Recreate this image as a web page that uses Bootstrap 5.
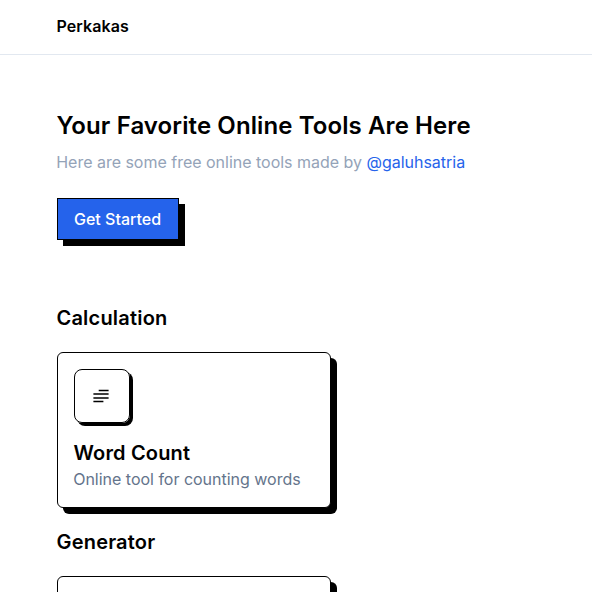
<!DOCTYPE html>
<html lang="en">
<head>
<meta charset="utf-8">
<meta name="viewport" content="width=device-width, initial-scale=1">
<title>Perkakas</title>
<link href="https://cdn.jsdelivr.net/npm/bootstrap@5.3.0/dist/css/bootstrap.min.css" rel="stylesheet">
<style>
body{font-family:Inter,sans-serif;color:#000;background:#fff;height:592px;overflow:hidden}
.page-wrap{padding:0 57px}
.site-bar{height:55px;padding-bottom:2px;border-bottom:1px solid #e2e8f0}
.brand-name{font-size:16px;line-height:24px;font-weight:600;color:#000;letter-spacing:.1px;margin-left:-.5px}
.hero{padding-top:55px}
.hero h1{font-size:24px;line-height:32px;font-weight:600;letter-spacing:.1px;margin-left:-.5px}
.hero p{color:#94a3b8;line-height:24px;letter-spacing:-.015px;margin-left:-.8px}
.hero p a{color:#2563eb}
.hero .start-btn{width:122px;height:42px;padding:8px 1px 8px 0;background:#2563eb;border:1px solid #000;border-radius:0;color:#fff;font-weight:500;line-height:24px;box-shadow:6px 6px 0 #000}
.tools{margin-top:64px}
.tools h2{font-size:20px;line-height:28px;font-weight:600;letter-spacing:.2px;margin:0 0 20px -.5px}
.tool-card{width:274px;height:156px;padding:16px;border:1px solid #000;border-radius:6px;box-shadow:6px 6px 0 #000;margin-bottom:20px}
.tool-icon{width:56px;height:54px;border:1px solid #000;border-radius:8px;box-shadow:3px 3px 0 #000}
.tool-card h3{font-size:20px;line-height:28px;font-weight:600;letter-spacing:.17px;margin:16px 0 0 -.5px}
.tool-card p{color:#64748b;line-height:24px;letter-spacing:-.015px;margin-left:-.8px}
</style>
</head>
<body>
<header class="site-bar page-wrap d-flex align-items-center"><a class="brand-name text-decoration-none" href="#">Perkakas</a></header>
<main class="page-wrap">
<section class="hero">
<h1 class="mb-2">Your Favorite Online Tools Are Here</h1>
<p class="mb-4">Here are some free online tools made by <a class="text-decoration-none" href="#">@galuhsatria</a></p>
<a class="btn start-btn" href="#">Get Started</a>
</section>
<section class="tools">
<h2>Calculation</h2>
<div class="card tool-card">
<div class="tool-icon d-flex align-items-center justify-content-center">
<svg width="18" height="18" viewBox="0 0 18 18" fill="none" stroke="#000" stroke-width="1.4"><path d="M5.7 3.5H15.6M.4 7H15.6M.4 11H15.6M.4 14.5h10"/></svg>
</div>
<h3>Word Count</h3>
<p class="mb-0">Online tool for counting words</p>
</div>
<h2>Generator</h2>
<div class="card tool-card mb-0"></div>
</section>
</main>
<script src="https://cdn.jsdelivr.net/npm/bootstrap@5.3.0/dist/js/bootstrap.bundle.min.js"></script>
</body>
</html>
